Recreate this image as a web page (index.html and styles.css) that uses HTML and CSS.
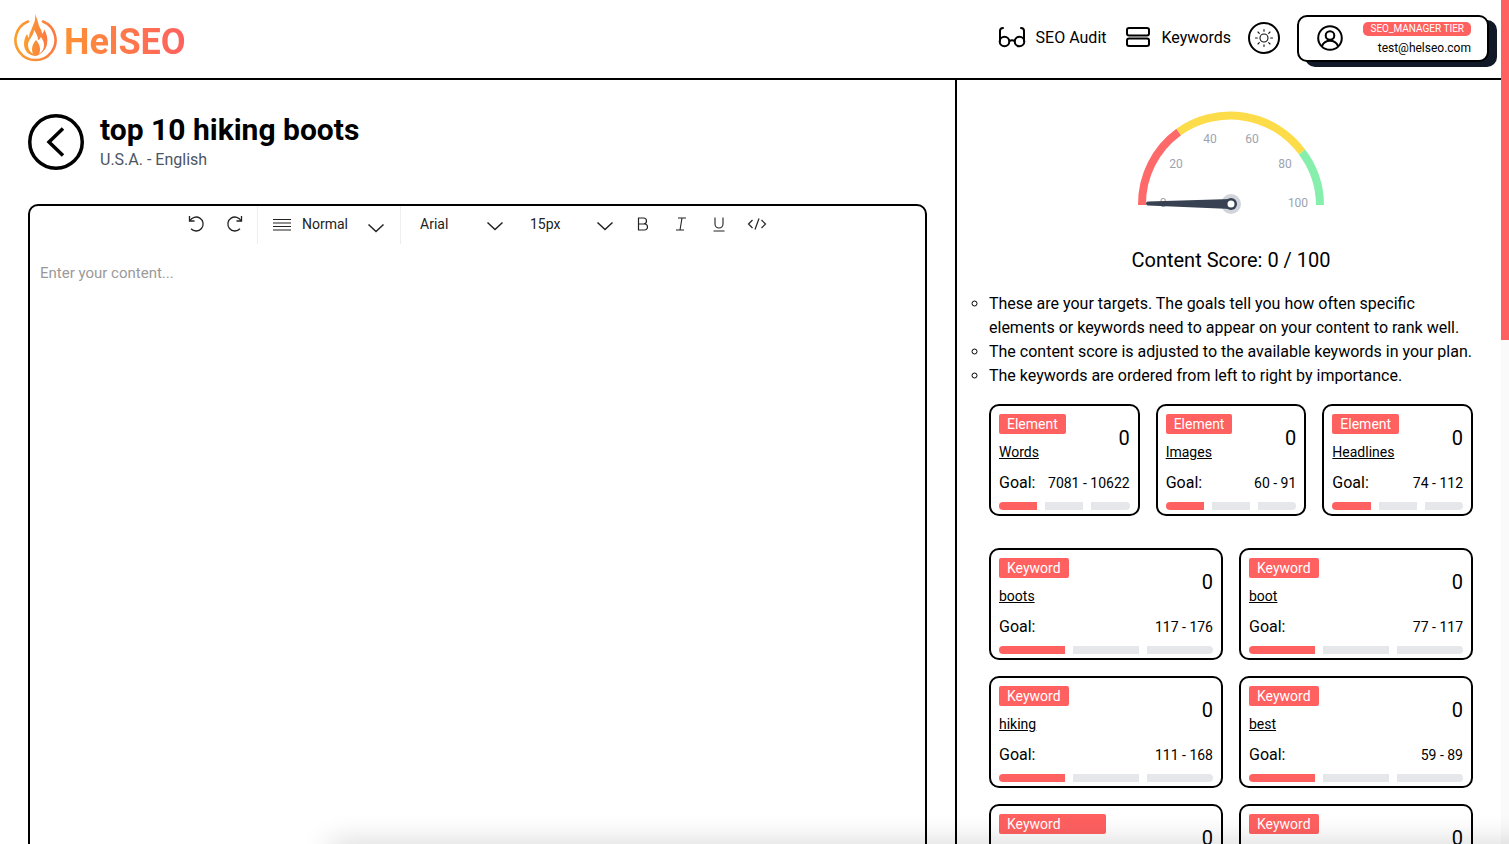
FILE: index.html
```html
<!DOCTYPE html>
<html lang="en">
<head>
  <meta charset="UTF-8">
  <meta name="viewport" content="width=device-width, initial-scale=1.0">
  <title>HelSEO</title>
  <link rel="stylesheet" href="styles.css">
</head>
<body>
<div class="page">
  <header class="topbar">
    <a class="logo">
      <svg class="logo-mark" width="46" height="50" viewBox="0 0 46 50">
        <defs>
          <linearGradient id="flame" x1="0" y1="0" x2="1" y2="0">
            <stop offset="0" stop-color="#fb9f2c"/>
            <stop offset="1" stop-color="#fa7a45"/>
          </linearGradient>
        </defs>
        <path d="M15 8.500A20 20 0 1 0 30 8.500" fill="none" stroke="url(#flame)" stroke-width="2.600" stroke-linecap="round"/>
        <path d="M22 1C25 7 25 11 27 15C28 17 29 18 29 21C31 19 31 17 31 16C34 21 35 26 34 31C33 37 28 41 23 43C16 43 11 38 11 31C11 27 12 24 14 21C15 23 15 24 16 25C16 20 18 18 19 15C21 10 23 7 22 1Z" fill="url(#flame)"/>
        <path d="M21 17C21 23 15 26 15 32C15 36 17 39 20 41C18 36 19 32 23 27C27 32 28 36 26 41C29 39 31 36 31 32C31 28 29 26 28 24C27 26 26 27 25 27C25 23 23 20 21 17Z" fill="#fff"/>
      </svg>
      <span class="logo-text">HelSEO</span>
    </a>
    <nav class="topnav">
      <a class="navlink">
        <svg width="28" height="22" viewBox="0 0 28 22" fill="none" stroke="#000" stroke-width="2" stroke-linecap="round" stroke-linejoin="round">
          <path d="M2 15V5q0-3 3-3M26 15V5q0-3-3-3"/>
          <circle cx="6.500" cy="15.500" r="4.800"/>
          <circle cx="21.500" cy="15.500" r="4.800"/>
          <path d="M11.500 15q2.500-1.600 5 0"/>
        </svg>
        SEO Audit
      </a>
      <a class="navlink navlink-wide">
        <svg width="24" height="20" viewBox="0 0 24 20" fill="none" stroke="#000" stroke-width="2">
          <rect x="1" y="1" width="22" height="7.500" rx="2"/>
          <rect x="1" y="11.500" width="22" height="7.500" rx="2"/>
        </svg>
        Keywords
      </a>
      <button class="theme-btn">
        <svg width="20" height="20" viewBox="0 0 20 20" fill="none" stroke="#111" stroke-width="1.100" stroke-linecap="round">
          <circle cx="10" cy="10" r="4"/>
          <path d="M10 1.500v1.800M10 16.700v1.800M1.500 10h1.800M16.700 10h1.800M4 4l1.300 1.300M14.700 14.700L16 16M4 16l1.300-1.300M14.700 5.300L16 4"/>
        </svg>
      </button>
      <div class="account">
        <svg class="account-icon" width="26" height="26" viewBox="0 0 26 26" fill="none" stroke="#000" stroke-width="2">
          <circle cx="13" cy="13" r="11.800"/>
          <circle cx="13" cy="10.500" r="4.300"/>
          <path d="M5 21c1.500-3.500 4.500-5.200 8-5.200s6.500 1.700 8 5.200"/>
        </svg>
        <div class="account-info">
          <span class="tier">SEO_MANAGER TIER</span>
          <span class="email">test@helseo.com</span>
        </div>
      </div>
    </nav>
  </header>

  <main class="workspace">
    <section class="editor-pane">
      <div class="title-row">
        <button class="back-btn">
          <svg width="56" height="56" viewBox="0 0 56 56" fill="none" stroke="#000" stroke-width="3.500">
            <circle cx="28" cy="28" r="26.250"/>
            <path d="M35 14.500L21 28l14 13.500"/>
          </svg>
        </button>
        <div>
          <h1 class="title">top 10 hiking boots</h1>
          <p class="subtitle">U.S.A. - English</p>
        </div>
      </div>

      <div class="editor">
        <div class="toolbar">
          <div class="tool-group history">
            <svg width="20" height="20" viewBox="0 0 20 20" fill="none" stroke="#222" stroke-width="1.300"><path d="M4.500 3v5h5"/><path d="M4.800 8A7 7 0 1 1 6 15.800"/></svg>
            <svg width="20" height="20" viewBox="0 0 20 20" fill="none" stroke="#222" stroke-width="1.300"><path d="M15.500 3v5h-5"/><path d="M15.200 8A7 7 0 1 0 14 15.800"/></svg>
          </div>
          <div class="tool-group para">
            <svg width="18" height="14" viewBox="0 0 18 14" stroke="#222" stroke-width="1.200"><path d="M0 1.500h18M0 5h18M0 8.500h18M0 12h18"/></svg>
            <span class="tool-label">Normal</span>
            <svg class="chev" width="18" height="10" viewBox="0 0 18 10" fill="none" stroke="#222" stroke-width="1.500"><path d="M1.500 1.500L9 8.500l7.500-7"/></svg>
          </div>
          <div class="tool-group font">
            <span class="tool-label font-name">Arial</span>
            <svg class="chev" width="18" height="10" viewBox="0 0 18 10" fill="none" stroke="#222" stroke-width="1.500"><path d="M1.500 1.500L9 8.500l7.500-7"/></svg>
            <span class="tool-label font-size">15px</span>
            <svg class="chev" width="18" height="10" viewBox="0 0 18 10" fill="none" stroke="#222" stroke-width="1.500"><path d="M1.500 1.500L9 8.500l7.500-7"/></svg>
          </div>
          <div class="tool-group marks">
            <svg width="14" height="16" viewBox="0 0 14 16" fill="none" stroke="#222" stroke-width="1.200"><path d="M2.500 2h5a3 3 0 0 1 0 6h-5zM2.500 8h6a3 3 0 0 1 0 6h-6z"/></svg>
            <svg width="14" height="16" viewBox="0 0 14 16" fill="none" stroke="#222" stroke-width="1.100"><path d="M4 2h8M2 14h8M8 2L6 14"/></svg>
            <svg width="14" height="16" viewBox="0 0 14 16" fill="none" stroke="#222" stroke-width="1.100"><path d="M3 1.500v6.500a4 4 0 0 0 8 0V1.500M1.500 15h11"/></svg>
            <svg class="code-icon" width="20" height="16" viewBox="0 0 20 16" fill="none" stroke="#222" stroke-width="1.200"><path d="M5.500 4L1.500 8l4 4M14.500 4l4 4-4 4M12 2.500L8 13.500"/></svg>
          </div>
        </div>
        <div class="editor-body">Enter your content...</div>
      </div>
    </section>

    <aside class="score-pane">
      <div class="gauge">
        <svg width="200" height="110" viewBox="0 0 200 110">
          <g fill="none" stroke-width="8">
            <path d="M11 100A89 89 0 0 1 47.700 27" stroke="#fe6a6a"/>
            <path d="M47.700 27A89 89 0 0 1 171 47" stroke="#fddc4a"/>
            <path d="M171 47A89 89 0 0 1 189 100" stroke="#86efac"/>
          </g>
          <g class="gauge-ticks">
            <text x="32" y="102">0</text>
            <text x="45" y="63">20</text>
            <text x="79" y="38">40</text>
            <text x="121" y="38">60</text>
            <text x="154" y="63">80</text>
            <text x="167" y="102">100</text>
          </g>
          <circle cx="100" cy="99" r="10" fill="#d1d5db"/>
          <path d="M17 96.500L100 94v10L17 100.500a2 2 0 0 1 0-4z" fill="#374151"/>
          <circle cx="100" cy="99" r="6" fill="#374151"/>
          <circle cx="100" cy="99" r="3.500" fill="#fff"/>
        </svg>
        <h2 class="score">Content Score: 0 / 100</h2>
      </div>

      <ul class="tips">
        <li>These are your targets. The goals tell you how often specific elements or keywords need to appear on your content to rank well.</li>
        <li>The content score is adjusted to the available keywords in your plan.</li>
        <li>The keywords are ordered from left to right by importance.</li>
      </ul>

      <div class="cards cards-3">
        <div class="card">
          <div class="card-head">
            <div><span class="tag">Element</span><a class="card-name">Words</a></div>
            <span class="card-count">0</span>
          </div>
          <div class="card-goal"><span>Goal:</span><span class="goal-range">7081 - 10622</span></div>
          <div class="meter"><i class="on"></i><i></i><i></i></div>
        </div>
        <div class="card">
          <div class="card-head">
            <div><span class="tag">Element</span><a class="card-name">Images</a></div>
            <span class="card-count">0</span>
          </div>
          <div class="card-goal"><span>Goal:</span><span class="goal-range">60 - 91</span></div>
          <div class="meter"><i class="on"></i><i></i><i></i></div>
        </div>
        <div class="card">
          <div class="card-head">
            <div><span class="tag">Element</span><a class="card-name">Headlines</a></div>
            <span class="card-count">0</span>
          </div>
          <div class="card-goal"><span>Goal:</span><span class="goal-range">74 - 112</span></div>
          <div class="meter"><i class="on"></i><i></i><i></i></div>
        </div>
      </div>

      <div class="cards cards-2">
        <div class="card">
          <div class="card-head">
            <div><span class="tag">Keyword</span><a class="card-name">boots</a></div>
            <span class="card-count">0</span>
          </div>
          <div class="card-goal"><span>Goal:</span><span class="goal-range">117 - 176</span></div>
          <div class="meter"><i class="on"></i><i></i><i></i></div>
        </div>
        <div class="card">
          <div class="card-head">
            <div><span class="tag">Keyword</span><a class="card-name">boot</a></div>
            <span class="card-count">0</span>
          </div>
          <div class="card-goal"><span>Goal:</span><span class="goal-range">77 - 117</span></div>
          <div class="meter"><i class="on"></i><i></i><i></i></div>
        </div>
        <div class="card">
          <div class="card-head">
            <div><span class="tag">Keyword</span><a class="card-name">hiking</a></div>
            <span class="card-count">0</span>
          </div>
          <div class="card-goal"><span>Goal:</span><span class="goal-range">111 - 168</span></div>
          <div class="meter"><i class="on"></i><i></i><i></i></div>
        </div>
        <div class="card">
          <div class="card-head">
            <div><span class="tag">Keyword</span><a class="card-name">best</a></div>
            <span class="card-count">0</span>
          </div>
          <div class="card-goal"><span>Goal:</span><span class="goal-range">59 - 89</span></div>
          <div class="meter"><i class="on"></i><i></i><i></i></div>
        </div>
        <div class="card">
          <div class="card-head">
            <div><span class="tag tag-wide">Keyword</span><a class="card-name">&nbsp;</a></div>
            <span class="card-count">0</span>
          </div>
        </div>
        <div class="card">
          <div class="card-head">
            <div><span class="tag">Keyword</span><a class="card-name">&nbsp;</a></div>
            <span class="card-count">0</span>
          </div>
        </div>
      </div>
    </aside>
  </main>
</div>
<div class="scrollbar"><div class="thumb"></div></div>
<div class="bottom-shadow"></div>
</body>
</html>
```
FILE: styles.css
```css
html, body {
  margin: 0;
  height: 100%;
  overflow: hidden;
}

body {
  display: flex;
  font-family: Roboto, sans-serif;
  color: #000;
  background: #fff;
}

.page {
  flex: 1;
  min-width: 0;
  height: 844px;
  display: flex;
  flex-direction: column;
}

.scrollbar {
  width: 8px;
  background: #fafafa;
}

.thumb {
  height: 340px;
  background: #ff6060;
}

/* something just below the fold throws this shadow up */
.bottom-shadow {
  position: fixed;
  left: 330px;
  right: -60px;
  bottom: -20px;
  height: 20px;
  box-shadow: 0 0 30px rgba(0, 0, 0, 0.2);
  pointer-events: none;
}

/* top bar */
.topbar {
  height: 78px;
  flex: none;
  border-bottom: 2px solid #000;
  display: flex;
  align-items: center;
  justify-content: space-between;
  padding: 0 12px 0 13px;
}

.logo {
  display: flex;
  align-items: center;
  gap: 5px;
}

.logo-mark {
  margin-top: -2px;
}

.logo-text {
  margin-top: 6px;
  font-size: 36px;
  font-weight: 700;
  background: linear-gradient(to right, #fe9134, #ff6060);
  -webkit-background-clip: text;
  background-clip: text;
  color: transparent;
}

.topnav {
  display: flex;
  align-items: center;
  margin-top: -4px;
}

.navlink {
  display: flex;
  align-items: center;
  gap: 10px;
  font-size: 16px;
  margin-right: 19px;
}

.navlink-wide {
  gap: 12px;
}

.theme-btn {
  width: 32px;
  height: 32px;
  padding: 0;
  margin: 2px 17px 0 -2px;
  border: 2px solid #000;
  border-radius: 50%;
  background: #fff;
  display: flex;
  align-items: center;
  justify-content: center;
}

.account {
  width: 192px;
  height: 47px;
  margin-top: 2px;
  box-sizing: border-box;
  border: 2px solid #000;
  border-radius: 10px;
  background: #fff;
  box-shadow: 8px 5px 0 #111827;
  display: flex;
  align-items: center;
  justify-content: space-between;
  padding: 0 16px 0 18px;
}

.account-info {
  display: flex;
  flex-direction: column;
  align-items: flex-end;
  gap: 5px;
}

.tier {
  background: #ff6060;
  color: #fff;
  font-size: 10px;
  line-height: 14px;
  padding: 0 7px;
  border-radius: 5px;
}

.email {
  font-size: 12px;
  line-height: 14px;
}

/* left side */
.workspace {
  flex: 1;
  min-height: 0;
  display: flex;
  overflow: hidden;
}

.editor-pane {
  width: 957px;
  flex: none;
  box-sizing: border-box;
  border-right: 2px solid #000;
  padding: 34px 28px 0;
}

.title-row {
  display: flex;
  align-items: center;
  gap: 16px;
  margin-bottom: 34px;
}

.back-btn {
  width: 56px;
  height: 56px;
  padding: 0;
  border: 0;
  background: none;
}

.back-btn svg {
  display: block;
}

.title {
  margin: 0;
  font-size: 30px;
  line-height: 30px;
  font-weight: 700;
}

.subtitle {
  margin: 5px 0 0;
  font-size: 16px;
  line-height: 20px;
  color: #4b5563;
}

.editor {
  height: 680px;
  box-sizing: border-box;
  border: 2px solid #000;
  border-radius: 10px;
}

.toolbar {
  height: 40px;
  display: flex;
  justify-content: center;
  font-size: 14px;
  color: #222;
}

.tool-group {
  display: flex;
  align-items: center;
  height: 38px;
  padding-bottom: 4px;
  box-sizing: border-box;
}

.history {
  gap: 21px;
  padding-right: 11px;
  border-right: 1px solid #eee;
}

.para {
  padding: 0 15px 0 15px;
  border-right: 1px solid #eee;
}

.para .tool-label {
  margin: -2px 19px 0 11px;
}

.font {
  padding-left: 19px;
}

.font .tool-label {
  margin-top: 2px;
}

.font-name {
  width: 66px;
}

.font-size {
  width: 66px;
  margin-left: 26px;
}

.chev {
  margin-top: 5px;
}

.marks {
  gap: 24px;
  margin-left: 22px;
  padding-right: 3px;
  padding-bottom: 2px;
}

.code-icon {
  margin-left: -3px;
}

.editor-body {
  padding: 17px 10px;
  font-size: 15px;
  line-height: 20px;
  color: #9a9a9a;
}

/* right side */
.score-pane {
  flex: 1;
  min-width: 0;
  box-sizing: border-box;
  padding: 25px 28px 0 32px;
}

.gauge {
  text-align: center;
}

.gauge svg {
  display: block;
  margin: 0 auto;
}

.gauge-ticks text {
  font-family: Roboto, sans-serif;
  font-size: 12px;
  fill: #9ca3af;
  text-anchor: middle;
}

.score {
  margin: 30px 0 0;
  font-size: 20px;
  line-height: 30px;
  font-weight: 400;
}

.tips {
  margin: 17px 0 0;
  padding: 0;
  list-style: circle;
  font-size: 16px;
  line-height: 24px;
}

.cards {
  display: grid;
  margin-top: 16px;
  gap: 16px;
}

.cards-3 {
  grid-template-columns: repeat(3, 1fr);
  margin-bottom: 32px;
}

.cards-2 {
  grid-template-columns: repeat(2, 1fr);
}

.card {
  height: 112px;
  box-sizing: border-box;
  border: 2px solid #000;
  border-radius: 10px;
  padding: 8px;
}

.card-head {
  display: flex;
  justify-content: space-between;
  align-items: center;
}

.tag {
  display: inline-block;
  background: #ff6060;
  color: #fff;
  font-size: 14px;
  line-height: 20px;
  padding: 0 8px;
  border-radius: 2px;
}

.tag-wide {
  padding-right: 45px;
}

.card-name {
  display: block;
  margin-top: 8px;
  font-size: 14px;
  line-height: 21px;
  text-decoration: underline;
}

.card-count {
  margin-top: -2px;
  font-size: 20px;
  line-height: 28px;
}

.card-goal {
  display: flex;
  justify-content: space-between;
  align-items: center;
  margin-top: 8px;
  font-size: 16px;
  line-height: 24px;
}

.goal-range {
  font-size: 14px;
}

.meter {
  display: flex;
  gap: 8px;
  margin-top: 7px;
  height: 8px;
  border-radius: 8px;
  overflow: hidden;
}

.meter i {
  flex: 1;
  background: #e5e7eb;
}

.meter i.on {
  background: #ff6060;
}
```
